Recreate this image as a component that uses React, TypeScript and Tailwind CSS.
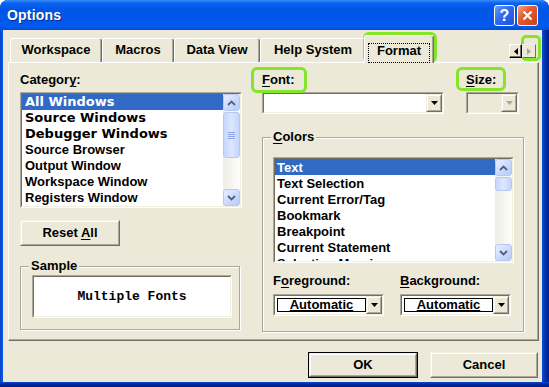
import React from "react";

const sunkOuter =
  "border border-t-[#ACA899] border-l-[#ACA899] border-b-white border-r-white";
const sunkInner =
  "border border-t-[#716F64] border-l-[#716F64] border-b-[#F1EFE2] border-r-[#F1EFE2]";
const raisedOuter =
  "border border-t-[#F1EFE2] border-l-[#F1EFE2] border-b-[#716F64] border-r-[#716F64]";
const raisedInner =
  "border border-t-white border-l-white border-b-[#ACA899] border-r-[#ACA899]";

function U({ children }: { children: React.ReactNode }) {
  return <span className="underline underline-offset-[2px] decoration-[1px]">{children}</span>;
}

function Chevron({ up }: { up?: boolean }) {
  return (
    <svg width="9" height="6" viewBox="0 0 9 6">
      <path
        d={up ? "M1 5 L4.5 1.5 L8 5" : "M1 1 L4.5 4.5 L8 1"}
        fill="none"
        stroke="#4D6185"
        strokeWidth="1.8"
      />
    </svg>
  );
}

function SBtn({ up }: { up?: boolean }) {
  return (
    <div className="w-[17px] h-[17px] shrink-0 rounded-[3px] border border-[#B4C8F6] bg-[linear-gradient(135deg,#E8EFFF_0%,#CBD9FC_55%,#B7CAF7_100%)] flex items-center justify-center">
      <Chevron up={up} />
    </div>
  );
}

function XPScroll({ thumb, grip }: { thumb: string; grip?: boolean }) {
  return (
    <div className="w-[17px] h-full shrink-0 flex flex-col bg-[linear-gradient(to_right,#EEEDE5,#FDFDFA)]">
      <SBtn up />
      <div
        className={`${thumb} w-[17px] shrink-0 rounded-[3px] border border-[#B4C8F6] bg-[linear-gradient(to_right,#C6D6FC,#DCE6FE_50%,#C4D4FB)] flex flex-col items-center justify-center gap-[1px]`}
      >
        {grip ? (
          <>
            <div className="w-[7px] h-[1px] bg-[#8DA6E4]" />
            <div className="w-[7px] h-[1px] bg-[#8DA6E4]" />
            <div className="w-[7px] h-[1px] bg-[#8DA6E4]" />
            <div className="w-[7px] h-[1px] bg-[#8DA6E4]" />
          </>
        ) : null}
      </div>
      <div className="flex-1" />
      <SBtn />
    </div>
  );
}

function DropBtn({ disabled }: { disabled?: boolean }) {
  return (
    <div className={`w-[16px] h-full shrink-0 bg-[#ECE9D8] ${raisedOuter}`}>
      <div className={`w-full h-full ${raisedInner} flex items-center justify-center`}>
        <svg width="7" height="4" viewBox="0 0 7 4">
          <path d="M0 0 H7 L3.5 4 Z" fill={disabled ? "#ACA899" : "#000"} />
        </svg>
      </div>
    </div>
  );
}

function ColorCombo() {
  return (
    <div className={`w-[111px] h-[22px] ${sunkOuter}`}>
      <div className={`w-full h-full ${sunkInner} bg-white flex items-center pl-[2px]`}>
        <div className="w-[89px] h-[14px] border border-black flex items-center justify-center leading-[12px]">
          <span className="underline underline-offset-[1px]">Automatic</span>
        </div>
        <div className="ml-auto h-full">
          <DropBtn />
        </div>
      </div>
    </div>
  );
}

function Tab({ label, w }: { label: string; w: string }) {
  return (
    <div
      className={`${w} h-[24px] shrink-0 rounded-t-[3px] border-t border-l border-r border-t-white border-l-white border-r-[#716F64] shadow-[inset_-1px_0_0_#ACA899] pt-[3px] text-center leading-[16px] text-[13px]`}
    >
      {label}
    </div>
  );
}

function ClassicBtn({ w, children, def }: { w: string; children: React.ReactNode; def?: boolean }) {
  if (def) {
    return (
      <div className={`${w} h-[26px] border border-black`}>
        <div className={`w-full h-full ${raisedOuter} bg-[#ECE9D8]`}>
          <div className={`w-full h-full ${raisedInner} flex items-center justify-center`}>{children}</div>
        </div>
      </div>
    );
  }
  return (
    <div className={`${w} h-[26px] ${raisedOuter} bg-[#ECE9D8]`}>
      <div className={`w-full h-full ${raisedInner} flex items-center justify-center`}>{children}</div>
    </div>
  );
}

const categories = [
  { t: "All Windows", heavy: true },
  { t: "Source Windows", heavy: true },
  { t: "Debugger Windows", heavy: true },
  { t: "Source Browser", heavy: false },
  { t: "Output Window", heavy: false },
  { t: "Workspace Window", heavy: false },
  { t: "Registers Window", heavy: false },
];

const colorItems = [
  "Text",
  "Text Selection",
  "Current Error/Tag",
  "Bookmark",
  "Breakpoint",
  "Current Statement",
  "Selection Margin",
];

export default function App() {
  return (
    <div className="relative w-[549px] h-[387px] overflow-hidden bg-white font-['Liberation_Sans',Arial,sans-serif] text-[13px] font-bold text-black">
      <div className="w-full h-full flex flex-col rounded-t-[8px] overflow-hidden bg-[#0A4BDC]">
        {/* Title bar */}
        <div className="h-[30px] shrink-0 flex items-center pl-[7px] pr-[11px] bg-[linear-gradient(to_bottom,#3D8EF8_0%,#0A62F2_10%,#0056E6_30%,#0057EA_70%,#005CF2_86%,#004BD2_100%)]">
          <span className="text-white text-[14px] font-bold leading-[16px] tracking-[0.2px] [text-shadow:1px_1px_0_#0A2C8C]">
            Options
          </span>
          <div className="ml-auto flex gap-[2px] mt-[1px]">
            <div className="w-[21px] h-[21px] rounded-[3px] border border-white bg-[linear-gradient(135deg,#6C9BFA_0%,#3168EE_45%,#1E52DA_100%)] flex items-center justify-center text-white text-[16px] font-bold leading-[16px]">
              ?
            </div>
            <div className="w-[21px] h-[21px] rounded-[3px] border border-white bg-[linear-gradient(135deg,#F2A486_0%,#E25B33_40%,#C9411D_100%)] flex items-center justify-center">
              <svg width="11" height="11" viewBox="0 0 11 11">
                <path d="M1.5 1.5 L9.5 9.5 M9.5 1.5 L1.5 9.5" stroke="#fff" strokeWidth="2.2" />
              </svg>
            </div>
          </div>
        </div>

        <div className="flex-1 flex min-h-0">
          <div className="w-[3px] shrink-0 bg-[linear-gradient(to_right,#0842C8,#0A5AEE)]" />
          <div className="w-[539px] shrink-0 bg-[#ECE9D8] flex flex-col pt-[5px]">
            {/* Tab strip */}
            <div className="ml-[5px] w-[531px] h-[27px] flex items-end pl-[2px] relative z-10">
              <Tab label="Workspace" w="w-[92px]" />
              <Tab label="Macros" w="w-[72px]" />
              <Tab label="Data View" w="w-[86px]" />
              <Tab label="Help System" w="w-[106px]" />
              <div className="w-[70px] h-[28px] -mb-[1px] -ml-[2px] shrink-0 rounded-t-[3px] border-t border-l border-r border-t-white border-l-white border-r-[#716F64] shadow-[inset_-1px_0_0_#ACA899] bg-[#ECE9D8] pt-[7px] flex justify-center">
                <span className="border border-dotted border-black px-[8px] leading-[14px]">Format</span>
              </div>
              <div className="ml-auto mr-[3px] mb-[4px] flex">
                <div className="w-[13px] h-[14px] border border-t-white border-l-white border-b-black border-r-black bg-[#ECE9D8] shadow-[inset_-1px_-1px_0_#716F64]">
                  <div className="w-full h-full flex items-center justify-center">
                    <svg width="4" height="7" viewBox="0 0 4 7">
                      <path d="M4 0 V7 L0 3.5 Z" fill="#000" />
                    </svg>
                  </div>
                </div>
                <div className={`w-[14px] h-[14px] ${raisedOuter} bg-[#ECE9D8]`}>
                  <div className="w-full h-full flex items-center justify-center">
                    <svg width="4" height="7" viewBox="0 0 4 7">
                      <path d="M0 0 V7 L4 3.5 Z" fill="#ACA899" />
                    </svg>
                  </div>
                </div>
              </div>
            </div>

            {/* Panel */}
            <div className="ml-[5px] w-[531px] h-[279px] border border-t-white border-l-white border-b-[#716F64] border-r-[#716F64] shadow-[inset_-1px_-1px_0_#ACA899] flex pl-[11px] pt-[9px]">
              {/* Left column */}
              <div className="w-[222px] flex flex-col">
                <div className="h-[20px] leading-[16px]">
                  Categor<U>y</U>:
                </div>
                <div className={`w-[222px] h-[116px] ${sunkOuter}`}>
                  <div className={`w-full h-full ${sunkInner} bg-white flex`}>
                    <div className="flex-1 flex flex-col overflow-hidden">
                      {categories.map((c, i) => (
                        <div
                          key={c.t}
                          className={`h-[16px] shrink-0 leading-[16px] pl-[3px] whitespace-nowrap ${
                            i === 0 ? "bg-[#316AC5] text-white" : ""
                          } ${c.heavy ? "font-['DejaVu_Sans',sans-serif] font-bold" : ""}`}
                        >
                          {c.t}
                        </div>
                      ))}
                    </div>
                    <XPScroll thumb="mt-[1px] h-[46px]" grip />
                  </div>
                </div>
                <div className="mt-[12px]">
                  <ClassicBtn w="w-[100px]">
                    <span className="h-[27px] leading-[25px]">
                      Reset <U>A</U>ll
                    </span>
                  </ClassicBtn>
                </div>
                <div className="relative mt-[20px] w-[220px] h-[64px] border border-[#ACA899] shadow-[inset_1px_1px_0_#fff,1px_1px_0_#fff] pl-[11px] pt-[8px]">
                  <div className="absolute left-[8px] -top-[9px] px-[2px] bg-[#ECE9D8] leading-[16px]">Sample</div>
                  <div className={`w-[200px] h-[43px] ${sunkOuter}`}>
                    <div className={`w-full h-full ${sunkInner} bg-white flex items-center justify-center font-['Liberation_Mono',monospace] font-bold text-[13px]`}>
                      Multiple Fonts
                    </div>
                  </div>
                </div>
              </div>

              {/* Right column */}
              <div className="ml-[20px] w-[263px] flex flex-col">
                <div className="h-[20px] leading-[16px] flex">
                  <div className="w-[204px]">
                    <U>F</U>ont:
                  </div>
                  <div>
                    <U>S</U>ize:
                  </div>
                </div>
                <div className="flex">
                  <div className={`w-[182px] h-[22px] ${sunkOuter}`}>
                    <div className={`w-full h-full ${sunkInner} bg-white flex justify-end`}>
                      <DropBtn />
                    </div>
                  </div>
                  <div className={`ml-[22px] w-[53px] h-[22px] ${sunkOuter}`}>
                    <div className={`w-full h-full ${sunkInner} bg-[#ECE9D8] flex justify-end`}>
                      <DropBtn disabled />
                    </div>
                  </div>
                </div>

                <div className="relative mt-[23px] w-[262px] h-[195px] border border-[#ACA899] shadow-[inset_1px_1px_0_#fff,1px_1px_0_#fff] pl-[10px] pt-[19px] flex flex-col">
                  <div className="absolute left-[8px] -top-[9px] px-[2px] bg-[#ECE9D8] leading-[16px]">
                    <U>C</U>olors
                  </div>
                  <div className={`w-[241px] h-[106px] ${sunkOuter}`}>
                    <div className={`w-full h-full ${sunkInner} bg-white flex`}>
                      <div className="flex-1 flex flex-col overflow-hidden">
                        {colorItems.map((c, i) => (
                          <div
                            key={c}
                            className={`h-[16px] shrink-0 leading-[16px] pl-[2px] pt-[1px] whitespace-nowrap ${
                              i === 0 ? "bg-[#316AC5] text-white" : ""
                            }`}
                          >
                            {c}
                          </div>
                        ))}
                      </div>
                      <XPScroll thumb="mt-[1px] h-[14px]" />
                    </div>
                  </div>
                  <div className="mt-[10px] h-[16px] leading-[16px] flex">
                    <div className="w-[127px]">
                      F<U>o</U>reground:
                    </div>
                    <div>
                      <U>B</U>ackground:
                    </div>
                  </div>
                  <div className="mt-[5px] flex gap-[16px]">
                    <ColorCombo />
                    <ColorCombo />
                  </div>
                </div>
              </div>
            </div>

            {/* Bottom buttons */}
            <div className="mt-[11px] flex justify-end pr-[4px] gap-[12px]">
              <ClassicBtn w="w-[110px]" def>
                OK
              </ClassicBtn>
              <ClassicBtn w="w-[108px]">Cancel</ClassicBtn>
            </div>
          </div>
          <div className="flex-1 bg-[linear-gradient(to_right,#0A4ED8,#0030A8,#00208A)]" />
        </div>
        <div className="h-[5px] shrink-0 bg-[linear-gradient(to_bottom,#0A45D0,#002A9C,#001C80)]" />
      </div>

      {/* Green highlight annotations */}
      <div className="absolute left-[363px] top-[32px] w-[74px] h-[31px] border-[3px] border-[#84E52B] rounded-[6px]" />
      <div className="absolute left-[521px] top-[35px] w-[20px] h-[26px] border-[3px] border-[#84E52B] rounded-[5px]" />
      <div className="absolute left-[251px] top-[67px] w-[56px] h-[26px] border-[3px] border-[#84E52B] rounded-[6px]" />
      <div className="absolute left-[456px] top-[67px] w-[50px] h-[24px] border-[3px] border-[#84E52B] rounded-[6px]" />
    </div>
  );
}
